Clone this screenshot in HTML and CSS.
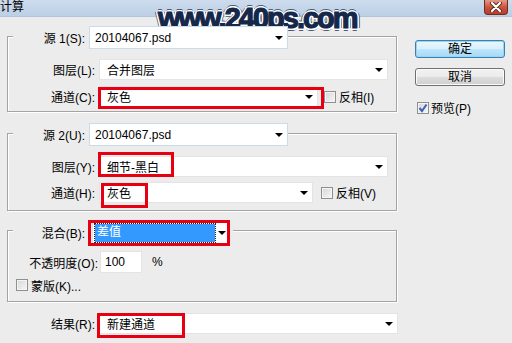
FILE: index.html
```html
<!DOCTYPE html>
<html>
<head>
<meta charset="utf-8">
<link rel="stylesheet" href="styles.css">
</head>
<body>
<div class="titlebar">
  <span class="title">计算</span>
  <div class="close"><svg width="14" height="10" viewBox="0 0 14 10"><path d="M3 1 L11 9 M11 1 L3 9" stroke="#5a2a20" stroke-width="4" stroke-linecap="round"/><path d="M3 1 L11 9 M11 1 L3 9" stroke="#fff" stroke-width="2.2" stroke-linecap="round"/></svg></div>
</div>
<div class="wm">www.240ps.com</div>
<div class="main">
  <div class="left">
    <div class="group g1">
      <div class="ghead"><span class="lbl lh">源 1(S):</span><div class="dd src">20104067.psd<i class="arr"></i></div></div>
      <div class="row r-layer"><span class="lbl">图层(L):</span><div class="dd w-full">合并图层<i class="arr"></i></div></div>
      <div class="row r-chan"><span class="lbl">通道(C):</span><div class="dd w-c1">灰色<i class="arr"></i><b class="mark m1"></b></div><div class="cb"><span class="box"></span>反相(I)</div></div>
    </div>
    <div class="group g2">
      <div class="ghead"><span class="lbl lh">源 2(U):</span><div class="dd src">20104067.psd<i class="arr"></i></div></div>
      <div class="row r-layer"><span class="lbl">图层(Y):</span><div class="dd w-full">细节-黑白<i class="arr"></i><b class="mark m2"></b></div></div>
      <div class="row r-chan2"><span class="lbl">通道(H):</span><div class="dd w-c2">灰色<i class="arr"></i><b class="mark m3"></b></div><div class="cb"><span class="box"></span>反相(V)</div></div>
    </div>
    <div class="group g3">
      <div class="ghead bhead"><span class="lbl lh">混合(B):</span><div class="dd blend"><span class="sel">差值</span><i class="arr"></i><b class="mark m4"></b></div></div>
      <div class="row r-op"><span class="lbl lop">不透明度(O):</span><div class="inp">100</div><span class="pct">%</span></div>
      <div class="row r-mask"><div class="cb"><span class="box"></span>蒙版(K)...</div></div>
    </div>
    <div class="row r-res"><span class="lbl lres">结果(R):</span><div class="dd w-res">新建通道<i class="arr"></i><b class="mark m5"></b></div></div>
  </div>
  <div class="right">
    <div class="btn ok">确定</div>
    <div class="btn cancel">取消</div>
    <div class="cb prev"><span class="box checked"><svg width="10" height="10" viewBox="0 0 10 10"><path d="M1.5 5 L4 8 L8.5 1.5" stroke="#3a64b8" stroke-width="2" fill="none"/></svg></span>预览(P)</div>
  </div>
</div>
</body>
</html>
```
FILE: styles.css
```css
* { box-sizing: border-box; }
html, body { margin: 0; padding: 0; }
body {
  width: 512px;
  height: 343px;
  overflow: hidden;
  background: #ececec;
  font-family: "Liberation Sans", "Noto Sans CJK SC", sans-serif;
  font-size: 12px;
  color: #000;
  position: relative;
}
.titlebar {
  height: 17px;
  background: linear-gradient(#cddced, #bccfe6);
  border-bottom: 1px solid #b0c4dc;
  display: flex;
  justify-content: space-between;
  align-items: flex-start;
}
.title { line-height: 15px; margin-left: 0; color: #000; }
.close {
  width: 24px;
  height: 15px;
  margin-right: 4px;
  background: linear-gradient(#e49a88, #c9503b 55%, #b8412c);
  border: 1px solid #6e2c1f;
  border-top: none;
  border-radius: 0 0 4px 4px;
  display: flex;
  align-items: center;
  justify-content: center;
}
.wm {
  position: absolute;
  left: 158px;
  top: 2px;
  font-family: "Liberation Sans", sans-serif;
  font-weight: bold;
  font-size: 29px;
  letter-spacing: -2px;
  color: #15284a;
  -webkit-text-stroke: 1.2px #15284a;
  line-height: 32px;
  text-shadow:
    2px 0 0 #fff, -2px 0 0 #fff, 0 2px 0 #fff, 0 -2px 0 #fff,
    1.5px 1.5px 0 #fff, -1.5px -1.5px 0 #fff, 1.5px -1.5px 0 #fff, -1.5px 1.5px 0 #fff,
    3px 0 0 #4a5c78, -3px 0 0 #4a5c78, 0 3px 0 #4a5c78, 0 -3px 0 #4a5c78;
}
.main { display: flex; }
.left { width: 392px; margin-left: 7px; }
.group {
  border: 1px solid #a4a4a4;
  box-shadow: inset 1px 1px 0 #fff, 1px 1px 0 #fff;
  width: 390px;
}
.g1 { margin-top: 19px; padding-bottom: 4px; }
.g2 { margin-top: 21px; padding-bottom: 7px; }
.g3 { margin-top: 19px; padding-bottom: 8px; }
.ghead {
  display: flex;
  align-items: center;
  margin-top: -11px;
  margin-left: 5px;
  width: 275px;
  background: #ececec;
  height: 23px;
}
.bhead { margin-top: -10px; width: 220px; }
.lbl { width: 87px; text-align: right; flex: none; white-space: nowrap; }
.lh { width: 72px; }
.row { display: flex; align-items: center; }
.dd {
  position: relative;
  height: 21px;
  background: #fff;
  border: 1px solid #e4e4e4;
  display: flex;
  align-items: center;
  justify-content: space-between;
  padding: 0 4px 0 7px;
  margin-left: 4px;
  flex: none;
  white-space: nowrap;
}
.src { width: 199px; height: 23px; padding-left: 5px; border-color: #c9dcec; }
.w-full { width: 289px; }
.w-c1 { width: 219px; }
.w-c2 { width: 214px; }
.arr {
  width: 0; height: 0;
  border-left: 4px solid transparent;
  border-right: 4px solid transparent;
  border-top: 4px solid #000;
  margin-top: 1px;
}
.r-layer { margin-top: 10px; }
.r-chan { margin-top: 6px; }
.r-chan2 { margin-top: 5px; }
.cb { display: flex; align-items: center; white-space: nowrap; }
.box {
  width: 12px; height: 12px;
  border: 1px solid #8f8f8f;
  background: linear-gradient(135deg, #d6d6d6, #f7f7f7);
  box-shadow: inset 0 0 0 1px #f4f4f4;
  margin-right: 3px;
  display: flex; align-items: center; justify-content: center;
}
.r-chan .cb { margin-left: 6px; }
.r-chan2 .cb { margin-left: 8px; }
.mark {
  position: absolute;
  border: 3px solid #e60012;
  pointer-events: none;
}
.m1 { left: -2px; top: 0px; width: 226px; height: 22px; }
.m2 { left: -2px; top: -5px; width: 76px; height: 25px; }
.m3 { left: 1px; top: 0px; width: 47px; height: 25px; }
.m4 { left: -5px; top: -3px; width: 142px; height: 26px; }
.m5 { left: -2px; top: -1px; width: 88px; height: 25px; }
.blend { width: 138px; height: 22px; margin-left: 7px; padding: 0 3px 0 2px; }
.sel {
  background: #3399ff;
  color: #fff;
  width: 120px;
  height: 18px;
  line-height: 17px;
  padding-left: 2px;
  outline: 1px dotted #222;
}
.r-op { margin-top: 7px; }
.lop { width: 90px; }
.inp {
  width: 42px; height: 22px;
  background: #fff;
  border: 1px solid #e4e4e4;
  margin-left: 2px;
  padding-left: 4px;
  line-height: 20px;
}
.pct { margin-left: 10px; }
.r-mask { margin-top: 4px; margin-left: 8px; height: 16px; }
.r-res { margin-top: 11px; }
.lres { width: 88px; }
.w-res { width: 300px; margin-left: 3px; padding-left: 8px; }
.right { margin-left: 16px; width: 90px; }
.btn {
  height: 18px;
  border-radius: 3px;
  text-align: center;
  line-height: 16px;
}
.ok {
  margin-top: 23px;
  border: 1px solid #3c7fb1;
  background: linear-gradient(#eaf6fd, #d9f0fc 50%, #bee6fd 50%, #a7d9f5);
  box-shadow: inset 0 0 0 1px #98d5f3;
}
.cancel {
  margin-top: 10px;
  border: 1px solid #707070;
  background: linear-gradient(#f2f2f2, #ebebeb 50%, #dddddd 50%, #cfcfcf);
  box-shadow: inset 0 0 0 1px #fbfbfb;
}
.prev { margin-top: 13px; margin-left: 2px; }
.prev .box { margin-right: 2px; }
```
